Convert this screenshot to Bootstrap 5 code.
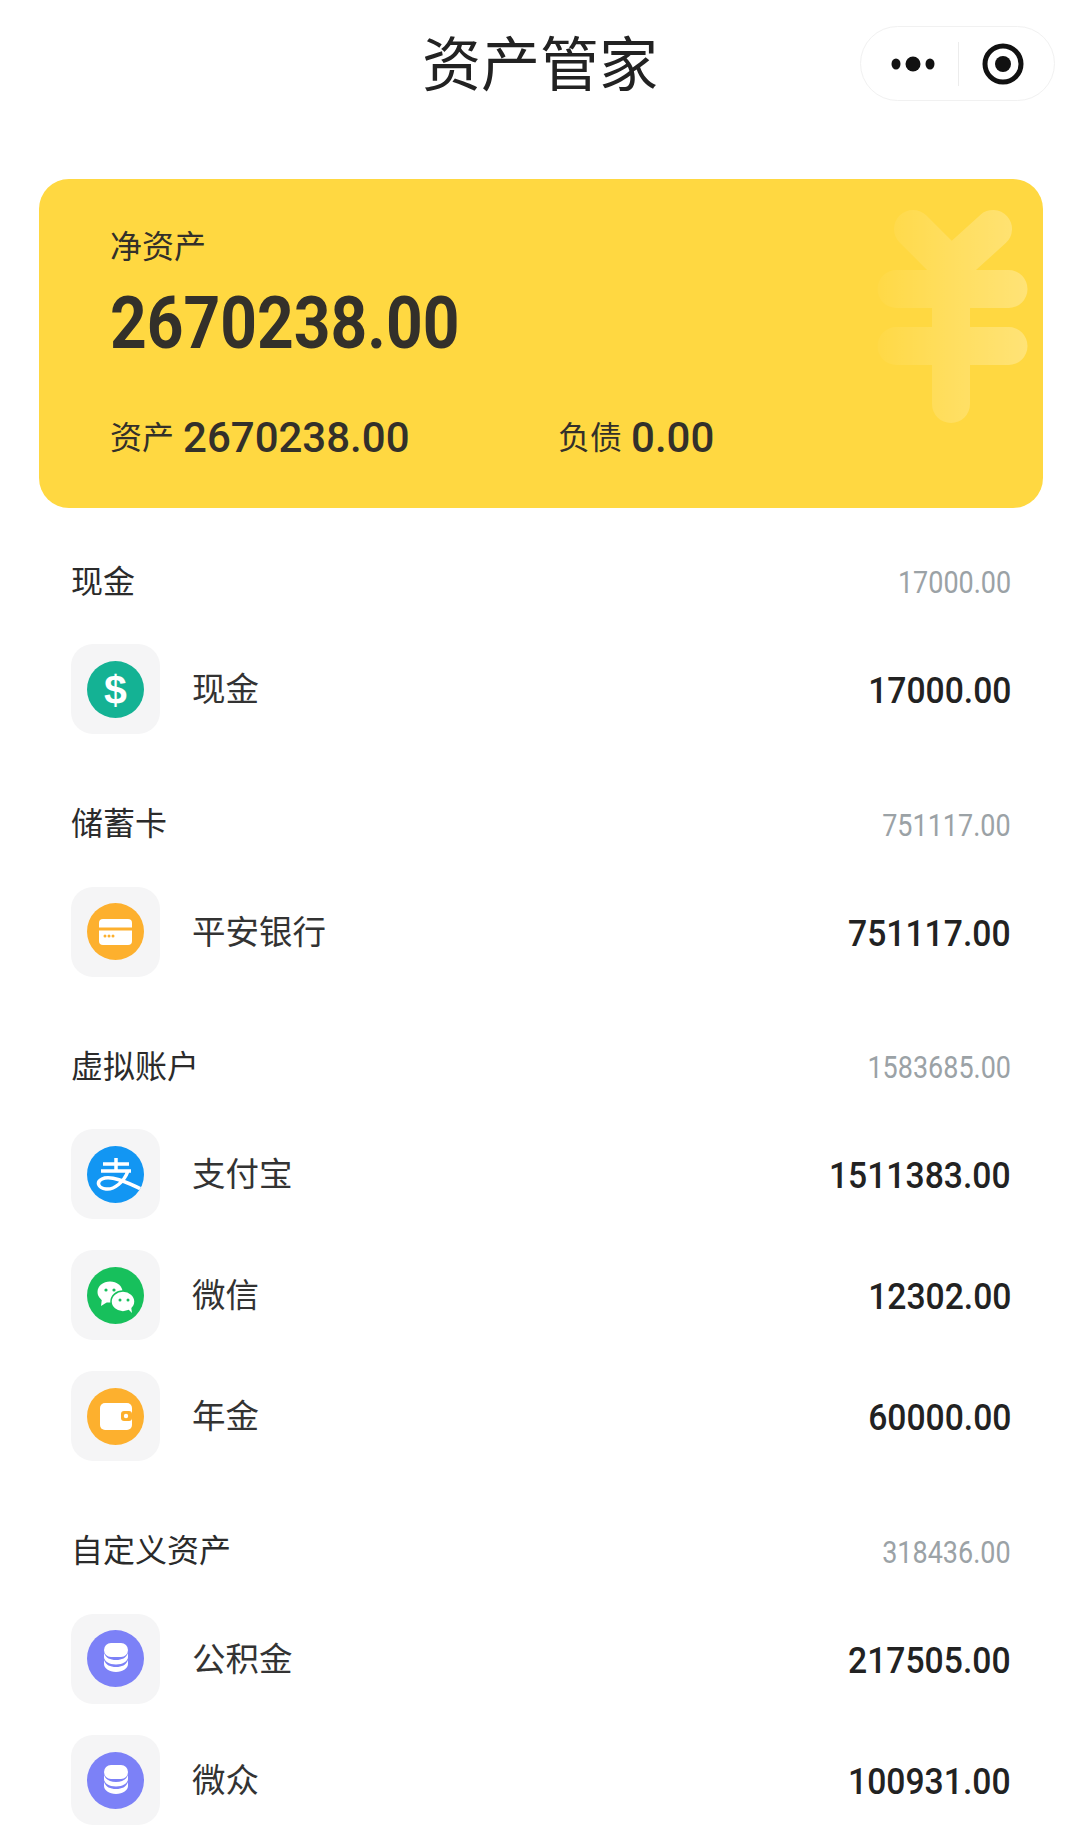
<!DOCTYPE html>
<html lang="zh-CN">
<head>
    <meta charset="UTF-8">
    <meta name="viewport" content="width=device-width, initial-scale=1.0">
    <title>资产管家</title>
    <link href="https://cdn.jsdelivr.net/npm/bootstrap@5.3.0/dist/css/bootstrap.min.css" rel="stylesheet">
    <style>
        body {
            background: #fff;
            color: #2b2b2b;
            font-family: "Noto Sans CJK SC", "Liberation Sans", sans-serif;
        }

        .app-top {
            height: 179px;
        }

        .app-title {
            font-size: 59px;
            font-weight: 400;
            line-height: 1;
            color: #222;
            top: 31px;
            left: 0;
            right: 0;
        }

        .capsule {
            top: 26px;
            right: 25px;
            width: 195px;
            height: 75px;
            border: 1px solid #f1f1f1;
            border-radius: 38px;
            background: #fff;
        }

        .capsule-dots {
            margin-left: 29px;
        }

        .capsule-line {
            width: 1px;
            height: 44px;
            margin: 0 23px 0 22px;
            background: #ececec;
        }

        .asset-card {
            height: 329px;
            margin: 0 37px 53px 39px;
            padding: 46px 0 0 71px;
            background: #ffd841;
            border-radius: 30px;
            color: #33302a;
        }

        .yen-mark {
            top: 28px;
            right: 10px;
        }

        .card-label {
            font-size: 32px;
            line-height: 38px;
        }

        .foot-label {
            margin-top: -4px;
        }

        .num {
            font-family: Roboto, "Liberation Sans", sans-serif;
            display: inline-block;
        }

        .net-value {
            font-size: 72px;
            font-weight: 700;
            line-height: 80px;
            margin-top: 21px;
            transform: scaleX(.89);
            transform-origin: left center;
        }

        .card-foot {
            margin-top: 49px;
            height: 48px;
        }

        .foot-cell {
            width: 448px;
        }

        .foot-value {
            font-size: 42px;
            font-weight: 500;
            margin-left: 9px;
        }

        .asset-group {
            padding: 0 69px 0 71px;
            margin-bottom: 69.5px;
        }

        .group-head {
            height: 40px;
            margin-bottom: 43px;
        }

        .group-name {
            font-size: 32px;
            line-height: 40px;
            margin-top: -5px;
            color: #2b2b2b;
        }

        .group-sum {
            font-size: 31px;
            line-height: 40px;
            margin-top: 4px;
            color: #9ba2a6;
            transform: scaleX(.87);
            transform-origin: right center;
        }

        .asset-rows {
            gap: 31.2px;
        }

        .icon-tile {
            width: 89px;
            height: 90px;
            background: #f5f5f6;
            border-radius: 22px;
        }

        .asset-name {
            font-size: 33.5px;
            line-height: 40px;
            margin: -4px 0 0 32px;
            color: #333;
        }

        .asset-value {
            font-size: 37px;
            font-weight: 500;
            line-height: 44px;
            margin-top: 4px;
            color: #222;
            transform: scaleX(.91);
            transform-origin: right center;
        }
    </style>
</head>
<body>
    <div class="app-top position-relative">
        <div class="app-title position-absolute text-center">资产管家</div>
        <div class="capsule position-absolute d-flex align-items-center">
            <svg class="capsule-dots flex-shrink-0" width="46" height="20" viewBox="0 0 46 20"><ellipse cx="6" cy="10" rx="4.5" ry="5.5" fill="#111"/><circle cx="23" cy="10" r="7.5" fill="#111"/><ellipse cx="40" cy="10" rx="4.5" ry="5.5" fill="#111"/></svg>
            <div class="capsule-line"></div>
            <svg class="flex-shrink-0" width="42" height="42" viewBox="0 0 42 42"><circle cx="21" cy="21" r="18" fill="none" stroke="#111" stroke-width="5"/><circle cx="21" cy="21" r="8" fill="#111"/></svg>
        </div>
    </div>

    <div class="asset-card position-relative overflow-hidden">
        <svg class="yen-mark position-absolute" width="170" height="225" viewBox="0 0 170 225">
            <defs>
                <linearGradient id="yenFade" gradientUnits="userSpaceOnUse" x1="10" y1="0" x2="165" y2="0">
                    <stop offset="0" stop-color="#fff" stop-opacity="0.02"/>
                    <stop offset="0.5" stop-color="#fff" stop-opacity="0.16"/>
                    <stop offset="1" stop-color="#fff" stop-opacity="0.28"/>
                </linearGradient>
            </defs>
            <path d="M50 22 L88 60 L130 22 M33.5 82 H145.5 M33.5 139 H145.5 M88 60 V197" fill="none" stroke="url(#yenFade)" stroke-width="38" stroke-linecap="round" stroke-linejoin="round"/>
        </svg>
        <div class="card-label">净资产</div>
        <div class="net-value num">2670238.00</div>
        <div class="card-foot d-flex align-items-center">
            <div class="foot-cell d-flex align-items-center">
                <span class="card-label foot-label">资产</span><span class="foot-value num">2670238.00</span>
            </div>
            <div class="d-flex align-items-center">
                <span class="card-label foot-label">负债</span><span class="foot-value num">0.00</span>
            </div>
        </div>
    </div>

    <section class="asset-group">
        <div class="group-head d-flex justify-content-between align-items-center">
            <span class="group-name">现金</span><span class="group-sum num">17000.00</span>
        </div>
        <div class="asset-rows d-flex flex-column">
            <div class="d-flex align-items-center">
                <div class="icon-tile d-flex align-items-center justify-content-center">
                    <svg width="57" height="57" viewBox="0 0 57 57"><circle cx="28.5" cy="28.5" r="28.5" fill="#14b294"/><text x="28.5" y="43" text-anchor="middle" font-family="Liberation Sans" font-weight="700" font-size="41" fill="#fff">$</text></svg>
                </div>
                <span class="asset-name">现金</span>
                <span class="asset-value num ms-auto">17000.00</span>
            </div>
        </div>
    </section>

    <section class="asset-group">
        <div class="group-head d-flex justify-content-between align-items-center">
            <span class="group-name">储蓄卡</span><span class="group-sum num">751117.00</span>
        </div>
        <div class="asset-rows d-flex flex-column">
            <div class="d-flex align-items-center">
                <div class="icon-tile d-flex align-items-center justify-content-center">
                    <svg width="57" height="57" viewBox="0 0 57 57"><circle cx="28.5" cy="28.5" r="28.5" fill="#fdb02e"/><rect x="12" y="16" width="33" height="26" rx="4" fill="#fff"/><rect x="12" y="24.5" width="33" height="3" fill="#fdb02e"/><circle cx="18" cy="33" r="1.5" fill="#fdb02e"/><circle cx="22" cy="33" r="1.5" fill="#fdb02e"/><circle cx="26" cy="33" r="1.5" fill="#fdb02e"/></svg>
                </div>
                <span class="asset-name">平安银行</span>
                <span class="asset-value num ms-auto">751117.00</span>
            </div>
        </div>
    </section>

    <section class="asset-group">
        <div class="group-head d-flex justify-content-between align-items-center">
            <span class="group-name">虚拟账户</span><span class="group-sum num">1583685.00</span>
        </div>
        <div class="asset-rows d-flex flex-column">
            <div class="d-flex align-items-center">
                <div class="icon-tile d-flex align-items-center justify-content-center">
                    <svg width="57" height="57" viewBox="0 0 57 57"><defs><clipPath id="payClip"><circle cx="28.5" cy="28.5" r="28.5"/></clipPath></defs><circle cx="28.5" cy="28.5" r="28.5" fill="#1296f3"/><path clip-path="url(#payClip)" d="M16 18 H42 M14 25 H44 M29 12 V25 M41 25 C37 36 27 44 19 43 C11 42 9 36 15 33 C23 29 38 35 58 45" fill="none" stroke="#fff" stroke-width="3.5"/></svg>
                </div>
                <span class="asset-name">支付宝</span>
                <span class="asset-value num ms-auto">1511383.00</span>
            </div>
            <div class="d-flex align-items-center">
                <div class="icon-tile d-flex align-items-center justify-content-center">
                    <svg width="57" height="57" viewBox="0 0 57 57"><circle cx="28.5" cy="28.5" r="28.5" fill="#17c05c"/><ellipse cx="23" cy="25" rx="12.5" ry="10.5" fill="#fff"/><path d="M15 31 L14 39 L22 34 Z" fill="#fff"/><ellipse cx="36" cy="34.5" rx="12" ry="10.5" fill="#fff" stroke="#17c05c" stroke-width="1.5"/><path d="M41 42 L45 46 L44 39 Z" fill="#fff"/><circle cx="19" cy="23" r="1.6" fill="#17c05c"/><circle cx="27" cy="23" r="1.6" fill="#17c05c"/><circle cx="33" cy="33" r="1.5" fill="#17c05c"/><circle cx="41" cy="33" r="1.5" fill="#17c05c"/></svg>
                </div>
                <span class="asset-name">微信</span>
                <span class="asset-value num ms-auto">12302.00</span>
            </div>
            <div class="d-flex align-items-center">
                <div class="icon-tile d-flex align-items-center justify-content-center">
                    <svg width="57" height="57" viewBox="0 0 57 57"><circle cx="28.5" cy="28.5" r="28.5" fill="#fdb02e"/><rect x="13" y="15" width="32" height="27" rx="5" fill="#fff"/><rect x="34" y="23" width="11" height="10" rx="3" fill="#fdb02e"/><circle cx="39" cy="28" r="2.2" fill="#fff"/></svg>
                </div>
                <span class="asset-name">年金</span>
                <span class="asset-value num ms-auto">60000.00</span>
            </div>
        </div>
    </section>

    <section class="asset-group">
        <div class="group-head d-flex justify-content-between align-items-center">
            <span class="group-name">自定义资产</span><span class="group-sum num">318436.00</span>
        </div>
        <div class="asset-rows d-flex flex-column">
            <div class="d-flex align-items-center">
                <div class="icon-tile d-flex align-items-center justify-content-center">
                    <svg width="57" height="57" viewBox="0 0 57 57"><circle cx="28.5" cy="28.5" r="28.5" fill="#7c81f7"/><rect x="17" y="13" width="24" height="14" rx="7" fill="#fff"/><path d="M17 23 C19 28 23 30 29 30 S39 28 41 23 V27 C41 31 36 34.5 29 34.5 S17 31 17 27 Z" fill="#fff"/><path d="M17 30 C19 35 23 37 29 37 S39 35 41 30 V34 C41 38 36 42 29 42 S17 38 17 34 Z" fill="#fff"/></svg>
                </div>
                <span class="asset-name">公积金</span>
                <span class="asset-value num ms-auto">217505.00</span>
            </div>
            <div class="d-flex align-items-center">
                <div class="icon-tile d-flex align-items-center justify-content-center">
                    <svg width="57" height="57" viewBox="0 0 57 57"><circle cx="28.5" cy="28.5" r="28.5" fill="#7c81f7"/><rect x="17" y="13" width="24" height="14" rx="7" fill="#fff"/><path d="M17 23 C19 28 23 30 29 30 S39 28 41 23 V27 C41 31 36 34.5 29 34.5 S17 31 17 27 Z" fill="#fff"/><path d="M17 30 C19 35 23 37 29 37 S39 35 41 30 V34 C41 38 36 42 29 42 S17 38 17 34 Z" fill="#fff"/></svg>
                </div>
                <span class="asset-name">微众</span>
                <span class="asset-value num ms-auto">100931.00</span>
            </div>
        </div>
    </section>

    <script src="https://cdn.jsdelivr.net/npm/bootstrap@5.3.0/dist/js/bootstrap.bundle.min.js"></script>
</body>
</html>
